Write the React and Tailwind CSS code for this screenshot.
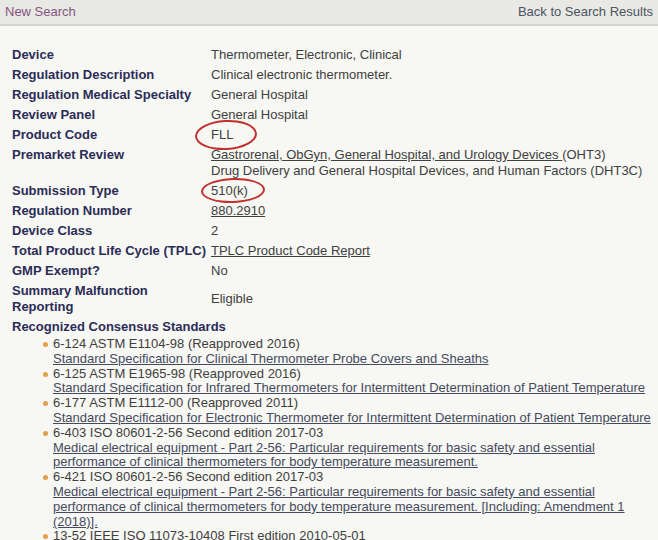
import React from "react";

const rows = [
  { label: "Device", value: "Thermometer, Electronic, Clinical" },
  { label: "Regulation Description", value: "Clinical electronic thermometer." },
  { label: "Regulation Medical Specialty", value: "General Hospital" },
  { label: "Review Panel", value: "General Hospital" },
  { label: "Product Code", value: "FLL", circle: "fll" },
  {
    label: "Premarket Review",
    value: (
      <>
        <div>
          <a className="underline">Gastrorenal, ObGyn, General Hospital, and Urology Devices </a>(OHT3)
        </div>
        <div>Drug Delivery and General Hospital Devices, and Human Factors (DHT3C)</div>
      </>
    ),
  },
  { label: "Submission Type", value: "510(k)", circle: "k" },
  { label: "Regulation Number", value: <a className="underline">880.2910</a> },
  { label: "Device Class", value: "2" },
  { label: "Total Product Life Cycle (TPLC)", value: <a className="underline">TPLC Product Code Report</a> },
  { label: "GMP Exempt?", value: "No" },
  {
    label: (
      <>
        Summary Malfunction
        <br />
        Reporting
      </>
    ),
    value: "Eligible",
    middle: true,
  },
];

const standards = [
  {
    title: "6-124 ASTM E1104-98 (Reapproved 2016)",
    link: "Standard Specification for Clinical Thermometer Probe Covers and Sheaths",
  },
  {
    title: "6-125 ASTM E1965-98 (Reapproved 2016)",
    link: "Standard Specification for Infrared Thermometers for Intermittent Determination of Patient Temperature",
  },
  {
    title: "6-177 ASTM E1112-00 (Reapproved 2011)",
    link: "Standard Specification for Electronic Thermometer for Intermittent Determination of Patient Temperature",
  },
  {
    title: "6-403 ISO 80601-2-56 Second edition 2017-03",
    link: "Medical electrical equipment - Part 2-56: Particular requirements for basic safety and essential performance of clinical thermometers for body temperature measurement.",
  },
  {
    title: "6-421 ISO 80601-2-56 Second edition 2017-03",
    link: "Medical electrical equipment - Part 2-56: Particular requirements for basic safety and essential performance of clinical thermometers for body temperature measurement. [Including: Amendment 1 (2018)].",
  },
  {
    title: "13-52 IEEE ISO 11073-10408 First edition 2010-05-01",
    link: "Health informatics - Personal health device communication - Part 10408: Device specialization - Thermometer",
  },
];

export default function App() {
  return (
    <div className="h-[540px] overflow-hidden bg-[#f7f7f3] font-['Liberation_Sans',Arial,sans-serif] text-[13px]">
      <div className="flex h-[26px] items-center justify-between border-b-2 border-[#d6d6d0] bg-[#e8e8e4] px-[5px]">
        <a className="text-[#84547f]">New Search</a>
        <a className="text-[#4b5563]">Back to Search Results</a>
      </div>

      <div className="pl-[12px] pr-[2px] pt-[19px]">
        <div className="grid grid-cols-[199px_1fr]">
          {rows.map((r, i) => (
            <React.Fragment key={i}>
              <div className="py-[2px] font-bold leading-[16px] text-[#2b2c57]">{r.label}</div>
              <div
                className={`relative py-[2px] leading-[16px] text-[#404040] ${
                  r.middle ? "self-center" : ""
                }`}
              >
                {r.value}
                {r.circle === "fll" && (
                  <span className="pointer-events-none absolute left-[-16px] top-[-5px] h-[30px] w-[62px] rotate-[-3deg] rounded-[50%] border-[2.5px] border-[#c0302e]" />
                )}
                {r.circle === "k" && (
                  <span className="pointer-events-none absolute left-[-10px] top-[-3px] h-[25px] w-[64px] rotate-[-2deg] rounded-[50%] border-[2.5px] border-[#c0302e]" />
                )}
              </div>
            </React.Fragment>
          ))}
        </div>

        <div className="py-[2px] font-bold leading-[16px] text-[#2b2c57]">Recognized Consensus Standards</div>

        <ul className="pl-[31px] text-[13px] leading-[14.8px] text-[#404040]">
          {standards.map((s, i) => (
            <li key={i} className="flex">
              <span className="mt-[5px] mr-[5px] h-[5px] w-[5px] shrink-0 rounded-full bg-[#e2a04a]" />
              <div>
                <div>{s.title}</div>
                <a className="text-[#454a5e] underline">{s.link}</a>
              </div>
            </li>
          ))}
        </ul>
      </div>
    </div>
  );
}
